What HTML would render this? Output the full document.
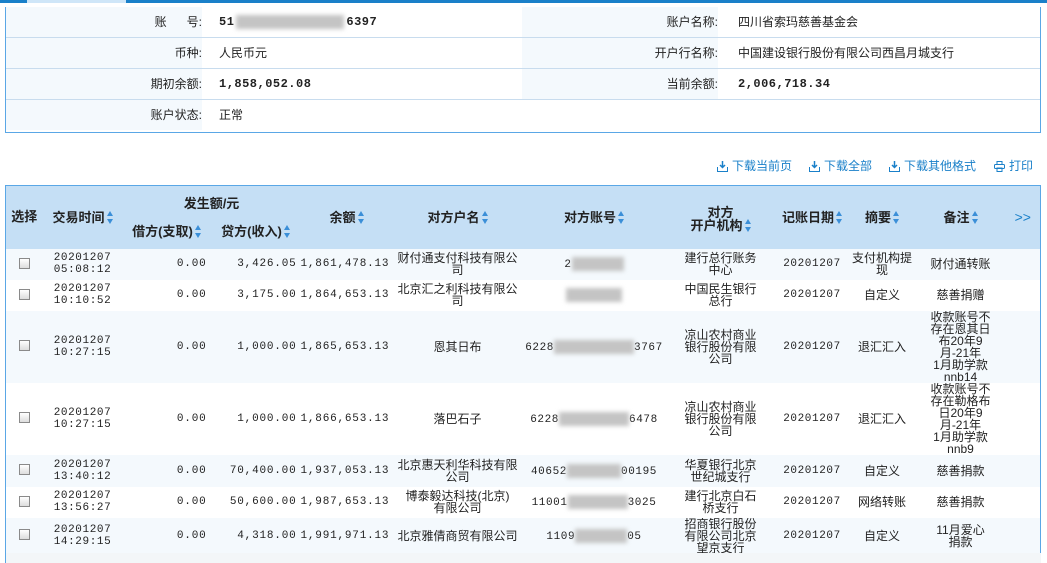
<!DOCTYPE html>
<html><head><meta charset="utf-8">
<style>
*{margin:0;padding:0;box-sizing:border-box}
body{width:1047px;height:563px;overflow:hidden;background:#fff;font-family:"Liberation Sans","WenQuanYi Zen Hei","Noto Sans CJK SC",sans-serif;font-size:12px;color:#222;position:relative}
.topbar{position:absolute;left:0;top:0;width:1047px;height:3px;background:#1a80c9}
.tab{position:absolute;left:27px;top:0;width:99px;height:3px;background:#cfe6f8}
.info{position:absolute;left:5px;top:7px;width:1036px;height:126px;border:1px solid #5aa7e6;border-top:none}
.info .r{position:absolute;left:0;width:1034px;height:31px;border-bottom:1px solid #c8dcee}
.lab{position:absolute;top:0;height:30px;line-height:30px;text-align:right;background:#f4f9fd}
.val{position:absolute;top:0;height:30px;line-height:30px}
.b{font-weight:bold;font-family:"Liberation Mono",monospace;font-size:12px;letter-spacing:0.5px}
.links{position:absolute;top:158px;color:#1a80c9;font-size:12px;line-height:16px}
.links span{position:absolute;white-space:nowrap}
.ico{position:absolute;top:3px}
table{position:absolute;left:5px;top:185px;border-collapse:collapse;table-layout:fixed;width:1036px;border:1px solid #5aa7e6}
td,th{padding:0;text-align:center;vertical-align:middle;line-height:12px;overflow:hidden}
th{background:#c5dff5;font-weight:bold;font-size:13px;color:#222;height:31px}
tr.l td{background:#f4f9fd}
td.n{text-align:right;padding-right:4px;font-family:"Liberation Mono",monospace;font-size:11px;letter-spacing:0.8px}
td.t{font-family:"Liberation Mono",monospace;font-size:11px;letter-spacing:0.6px}
.cb{display:inline-block;width:11px;height:11px;border:1px solid #8a8a8a;background:linear-gradient(#fff,#ddd)}
.s{display:inline-block;width:6px;height:13px;vertical-align:-2px;margin-left:2px}
.blur{display:inline-block;background:#c4c4c4;filter:blur(2px);height:14px;vertical-align:middle}
.foot{position:absolute;left:5px;top:553px;width:1036px;height:10px;background:#f3f6f8;border-left:1px solid #5aa7e6}
</style></head><body>
<div class="topbar"></div><div class="tab"></div>
<div class="info">
 <div class="r" style="top:0"><div class="lab" style="left:0;width:196px">账&nbsp;&nbsp;&nbsp;&nbsp;&nbsp;&nbsp;号:</div><div class="val b" style="left:213px">51<span class="blur" style="width:108px;margin:0 2px"></span>6397</div><div class="lab" style="left:516px;width:196px">账户名称:</div><div class="val" style="left:732px">四川省索玛慈善基金会</div></div>
 <div class="r" style="top:31px"><div class="lab" style="left:0;width:196px">币种:</div><div class="val" style="left:213px">人民币元</div><div class="lab" style="left:516px;width:196px">开户行名称:</div><div class="val" style="left:732px">中国建设银行股份有限公司西昌月城支行</div></div>
 <div class="r" style="top:62px"><div class="lab" style="left:0;width:196px">期初余额:</div><div class="val b" style="left:213px">1,858,052.08</div><div class="lab" style="left:516px;width:196px">当前余额:</div><div class="val b" style="left:732px">2,006,718.34</div></div>
 <div class="r" style="top:93px;border-bottom:none"><div class="lab" style="left:0;width:196px">账户状态:</div><div class="val" style="left:213px">正常</div></div>
</div>
<div class="links">
 <svg class="ico" style="left:717px" width="11" height="11" viewBox="0 0 11 11"><path d="M5.5 0v6M3 4l2.5 2.5L8 4" stroke="#1a80c9" fill="none" stroke-width="1.5"/><path d="M0.5 6v4.5h10V6" stroke="#1a80c9" fill="none"/></svg><span style="left:732px">下载当前页</span>
 <svg class="ico" style="left:809px" width="11" height="11" viewBox="0 0 11 11"><path d="M5.5 0v6M3 4l2.5 2.5L8 4" stroke="#1a80c9" fill="none" stroke-width="1.5"/><path d="M0.5 6v4.5h10V6" stroke="#1a80c9" fill="none"/></svg><span style="left:824px">下载全部</span>
 <svg class="ico" style="left:889px" width="11" height="11" viewBox="0 0 11 11"><path d="M5.5 0v6M3 4l2.5 2.5L8 4" stroke="#1a80c9" fill="none" stroke-width="1.5"/><path d="M0.5 6v4.5h10V6" stroke="#1a80c9" fill="none"/></svg><span style="left:904px">下载其他格式</span>
 <svg class="ico" style="left:994px" width="11" height="11" viewBox="0 0 11 11"><rect x="3" y="0.5" width="5" height="3" stroke="#1a80c9" fill="none"/><rect x="0.5" y="3.5" width="10" height="4" rx="1" stroke="#1a80c9" fill="none"/><rect x="3" y="7" width="5" height="3.5" stroke="#1a80c9" fill="none"/></svg><span style="left:1009px">打印</span>
</div>
<svg width="0" height="0" style="position:absolute"><defs><symbol id="so" viewBox="0 0 6 13"><path d="M3 0L6 5H0z M0 8h6L3 13z" fill="#3b8fd8"/></symbol></defs></svg>
<table>
<colgroup><col style="width:37px"><col style="width:80px"><col style="width:88px"><col style="width:90px"><col style="width:92px"><col style="width:130px"><col style="width:143px"><col style="width:110px"><col style="width:73px"><col style="width:67px"><col style="width:90px"><col style="width:35px"></colgroup>
<tr><th rowspan="2">选择</th><th rowspan="2">交易时间<svg class="s"><use href="#so"/></svg></th><th colspan="2" style="height:32px;padding-top:4px">发生额/元</th><th rowspan="2">余额<svg class="s"><use href="#so"/></svg></th><th rowspan="2">对方户名<svg class="s"><use href="#so"/></svg></th><th rowspan="2">对方账号<svg class="s"><use href="#so"/></svg></th><th rowspan="2" style="line-height:13px;padding-top:4px">对方<br>开户机构<svg class="s"><use href="#so"/></svg></th><th rowspan="2">记账日期<svg class="s"><use href="#so"/></svg></th><th rowspan="2">摘要<svg class="s"><use href="#so"/></svg></th><th rowspan="2">备注<svg class="s"><use href="#so"/></svg></th><th rowspan="2" style="color:#1a80c9;font-weight:normal;font-size:14px">&gt;&gt;</th></tr>
<tr><th style="height:30px;padding-bottom:4px">借方(支取)<svg class="s"><use href="#so"/></svg></th><th style="padding-bottom:4px">贷方(收入)<svg class="s"><use href="#so"/></svg></th></tr>
<tr class="l" style="height:31px"><td><span class="cb"></span></td><td class="t">20201207<br>05:08:12</td><td class="n">0.00</td><td class="n">3,426.05</td><td class="n">1,861,478.13</td><td>财付通支付科技有限公<br>司</td><td class="t">2<span class="blur" style="width:52px"></span></td><td>建行总行账务<br>中心</td><td class="t">20201207</td><td>支付机构提<br>现</td><td>财付通转账</td><td></td></tr>
<tr style="height:31px"><td><span class="cb"></span></td><td class="t">20201207<br>10:10:52</td><td class="n">0.00</td><td class="n">3,175.00</td><td class="n">1,864,653.13</td><td>北京汇之利科技有限公<br>司</td><td class="t"><span class="blur" style="width:56px"></span></td><td>中国民生银行<br>总行</td><td class="t">20201207</td><td>自定义</td><td>慈善捐赠</td><td></td></tr>
<tr class="l" style="height:72px"><td><span class="cb"></span></td><td class="t">20201207<br>10:27:15</td><td class="n">0.00</td><td class="n">1,000.00</td><td class="n">1,865,653.13</td><td>恩其日布</td><td class="t">6228<span class="blur" style="width:80px"></span>3767</td><td>凉山农村商业<br>银行股份有限<br>公司</td><td class="t">20201207</td><td>退汇汇入</td><td>收款账号不<br>存在恩其日<br>布20年9<br>月-21年<br>1月助学款<br>nnb14</td><td></td></tr>
<tr style="height:72px"><td><span class="cb"></span></td><td class="t">20201207<br>10:27:15</td><td class="n">0.00</td><td class="n">1,000.00</td><td class="n">1,866,653.13</td><td>落巴石子</td><td class="t">6228<span class="blur" style="width:70px"></span>6478</td><td>凉山农村商业<br>银行股份有限<br>公司</td><td class="t">20201207</td><td>退汇汇入</td><td>收款账号不<br>存在勒格布<br>日20年9<br>月-21年<br>1月助学款<br>nnb9</td><td></td></tr>
<tr class="l" style="height:32px"><td><span class="cb"></span></td><td class="t">20201207<br>13:40:12</td><td class="n">0.00</td><td class="n">70,400.00</td><td class="n">1,937,053.13</td><td>北京惠天利华科技有限<br>公司</td><td class="t">40652<span class="blur" style="width:54px"></span>00195</td><td>华夏银行北京<br>世纪城支行</td><td class="t">20201207</td><td>自定义</td><td>慈善捐款</td><td></td></tr>
<tr style="height:31px"><td><span class="cb"></span></td><td class="t">20201207<br>13:56:27</td><td class="n">0.00</td><td class="n">50,600.00</td><td class="n">1,987,653.13</td><td>博泰毅达科技(北京)<br>有限公司</td><td class="t">11001<span class="blur" style="width:60px"></span>3025</td><td>建行北京白石<br>桥支行</td><td class="t">20201207</td><td>网络转账</td><td>慈善捐款</td><td></td></tr>
<tr class="l" style="height:35px"><td><span class="cb"></span></td><td class="t">20201207<br>14:29:15</td><td class="n">0.00</td><td class="n">4,318.00</td><td class="n">1,991,971.13</td><td>北京雅倩商贸有限公司</td><td class="t">1109<span class="blur" style="width:52px"></span>05</td><td>招商银行股份<br>有限公司北京<br>望京支行</td><td class="t">20201207</td><td>自定义</td><td>11月爱心<br>捐款</td><td></td></tr>
</table>
<div class="foot"></div>
</body></html>
